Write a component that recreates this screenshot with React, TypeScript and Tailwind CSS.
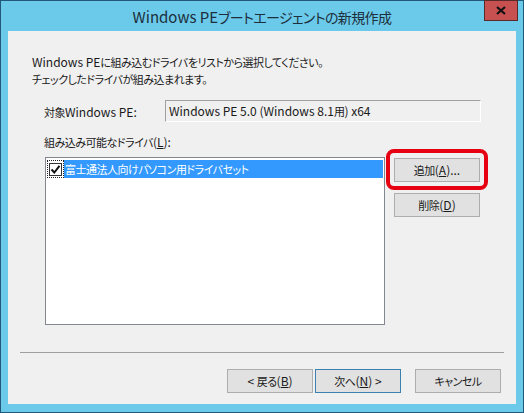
import React from "react";

const font = {
  fontFamily: '"Noto Sans CJK JP", "Noto Sans", sans-serif',
  fontFeatureSettings: '"palt"',
};

function J({ children }: { children: React.ReactNode }) {
  return <span className="text-[11px] tracking-[-0.5px] leading-none">{children}</span>;
}

function Btn({
  children,
  def,
  className = "",
}: {
  children: React.ReactNode;
  def?: boolean;
  className?: string;
}) {
  return (
    <div
      className={`w-[86px] h-[24px] flex items-center justify-center bg-[#e1e1e1] border text-[12px] text-[#1a1a1a] ${
        def ? "border-[#3c7fb1]" : "border-[#adadad]"
      } ${className}`}
    >
      <span className="leading-[16px] whitespace-pre">{children}</span>
    </div>
  );
}

export default function App() {
  return (
    <div
      className="w-[524px] h-[413px] bg-[#6bc9e9] border border-[#22587a] flex flex-col text-[#1a1a1a]"
      style={font}
    >
      <div className="h-[30px] relative flex items-center justify-center">
        <span className="text-[15px] text-[#1c2f3c] leading-none mt-[1px]">
          Windows PE
          <span className="text-[14px] tracking-[-0.6px]">ブートエージェントの新規作成</span>
        </span>
        <div className="absolute top-[-1px] right-[5px] w-[34px] h-[21px] bg-[#c75050] border border-[#5a2a2a] flex items-center justify-center">
          <svg width="10" height="9" viewBox="0 0 10 9">
            <path d="M1 1 L9 8 M9 1 L1 8" stroke="#111" strokeWidth="2.2" />
          </svg>
        </div>
      </div>
      <div className="mx-[7px] h-[373px] bg-[#f0f0f0] flex flex-col">
        <div className="pt-[22px] pl-[24px] text-[12px] leading-[17px]">
          <div>
            Windows PE<J>に組み込むドライバをリストから選択してください。</J>
          </div>
          <div>
            <J>チェックしたドライバが組み込まれます。</J>
          </div>
        </div>
        <div className="mt-[13px] pl-[36px] flex items-center text-[12px]">
          <div className="w-[121px] leading-[17px]">
            <J>対象</J>Windows PE:
          </div>
          <div className="w-[316px] h-[22px] border border-t-[#a0a0a0] border-l-[#a0a0a0] border-r-white border-b-white flex items-center pl-[3px]">
            <span className="leading-[16px]">
              Windows PE 5.0 (Windows 8.1<J>用</J>) x64
            </span>
          </div>
        </div>
        <div className="mt-[11px] pl-[36px] text-[12px] leading-[17px] h-[17px]">
          <J>組み込み可能なドライバ</J>(<span className="underline">L</span>):
        </div>
        <div className="mt-[7px] pl-[37px] flex">
          <div className="w-[340px] h-[168px] bg-white border border-[#828790] pt-[2px] px-[1px]">
            <div className="flex items-center h-[18px]">
              <div className="w-[17px] h-[18px] flex items-center justify-center border border-dotted border-[#222]">
                <div className="w-[13px] h-[13px] bg-white border border-[#333] flex items-center justify-center">
                  <svg width="11" height="11" viewBox="0 0 11 11">
                    <path d="M1.5 5.5 L4.3 8.5 L9.5 1.8" stroke="#111" strokeWidth="2" fill="none" />
                  </svg>
                </div>
              </div>
              <div className="flex-1 h-[18px] bg-[#3399ff] text-white text-[12px] flex items-center pl-[1px]">
                <span className="leading-[16px]">
                  <J>富士通法人向けパソコン用ドライバセット</J>
                </span>
              </div>
            </div>
          </div>
          <div className="ml-[9px] pt-[1px] flex flex-col gap-[11px]">
            <div className="relative">
              <Btn>
                <J>追加</J>(<span className="underline">A</span>)...
              </Btn>
              <div className="absolute top-[-9px] left-[-8px] right-[-8px] bottom-[-8px] border-[4px] border-[#e60012] rounded-[8px]" />
            </div>
            <Btn>
              <J>削除</J>(<span className="underline">D</span>)
            </Btn>
          </div>
        </div>
        <div className="mt-[27px] mx-[12px] h-px bg-[#a0a0a0]" />
        <div className="mt-[16px] pr-[15px] flex justify-end">
          <Btn>
            {"< "}
            <J>戻る</J>(<span className="underline">B</span>)
          </Btn>
          <Btn def className="ml-[2px]">
            <J>次へ</J>(<span className="underline">N</span>){" >"}
          </Btn>
          <Btn className="ml-[14px]">
            <J>キャンセル</J>
          </Btn>
        </div>
      </div>
    </div>
  );
}
